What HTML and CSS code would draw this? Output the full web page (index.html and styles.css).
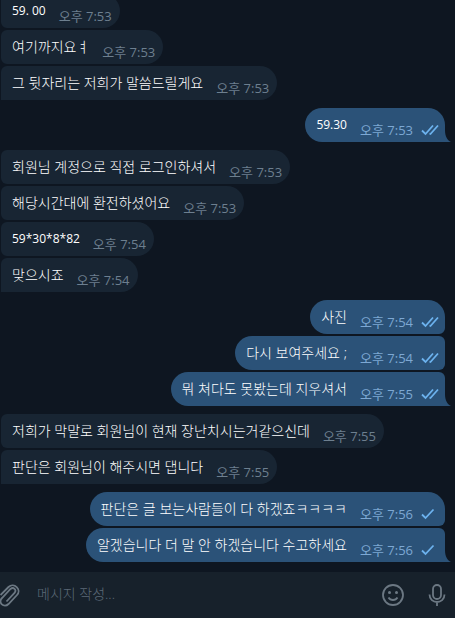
FILE: index.html
```html
<!DOCTYPE html>
<html lang="ko">

<head>
  <meta charset="utf-8">
  <meta name="viewport" content="width=device-width, initial-scale=1">
  <title>채팅</title>
  <link rel="stylesheet" href="styles.css">
</head>

<body>
  <svg class="sprite" aria-hidden="true">
    <symbol id="read" viewBox="0 0 18 12">
      <path d="M1 6.500l3.500 3.500 7.500-8.500M8.500 9.500l1 .5 7.500-8.500" />
    </symbol>
    <symbol id="sent" viewBox="0 0 18 12">
      <path d="M1 6.500l3.500 3.500 8-8.500" />
    </symbol>
    <symbol id="tail" viewBox="0 0 6 12">
      <path d="M0 0c0 6 2 10 6 12H0z" />
    </symbol>
  </svg>

  <main class="chat">
    <div class="group">
      <div class="message"><span class="text digits">59. 00</span><time>오후 7:53</time></div>
      <div class="message"><span class="text">여기까지요ㅕ</span><time>오후 7:53</time></div>
      <div class="message last"><span class="text">그 뒷자리는 저희가 말씀드릴게요</span><time>오후 7:53</time></div>
    </div>
    <div class="group out">
      <div class="message last"><span class="text digits">59.30</span><time>오후 7:53</time><svg class="status"><use href="#read" /></svg><svg class="tail"><use href="#tail" /></svg></div>
    </div>
    <div class="group">
      <div class="message"><span class="text">회원님 계정으로 직접 로그인하셔서</span><time>오후 7:53</time></div>
      <div class="message"><span class="text">해당시간대에 환전하셨어요</span><time>오후 7:53</time></div>
      <div class="message"><span class="text digits">59*30*8*82</span><time>오후 7:54</time></div>
      <div class="message last"><span class="text">맞으시죠</span><time>오후 7:54</time></div>
    </div>
    <div class="group out">
      <div class="message"><span class="text">사진</span><time>오후 7:54</time><svg class="status"><use href="#read" /></svg></div>
      <div class="message"><span class="text">다시 보여주세요 ;</span><time>오후 7:54</time><svg class="status"><use href="#read" /></svg></div>
      <div class="message last"><span class="text">뭐 쳐다도 못봤는데 지우셔서</span><time>오후 7:55</time><svg class="status"><use href="#read" /></svg><svg class="tail"><use href="#tail" /></svg></div>
    </div>
    <div class="group">
      <div class="message"><span class="text">저희가 막말로 회원님이 현재 장난치시는거같으신데</span><time>오후 7:55</time></div>
      <div class="message last"><span class="text">판단은 회원님이 해주시면 댑니다</span><time>오후 7:55</time></div>
    </div>
    <div class="group out">
      <div class="message"><span class="text">판단은 글 보는사람들이 다 하겠죠ㅋㅋㅋㅋ</span><time>오후 7:56</time><svg class="status"><use href="#sent" /></svg></div>
      <div class="message last"><span class="text">알겠습니다 더 말 안 하겠습니다 수고하세요</span><time>오후 7:56</time><svg class="status"><use href="#sent" /></svg><svg class="tail"><use href="#tail" /></svg></div>
    </div>
  </main>

  <form class="composer">
    <button type="button" class="attach" aria-label="파일 첨부">
      <svg viewBox="0 0 24 24"><path d="M2 11.500l8-8c5.500-5 13.500 2.500 8.500 8l-8.500 9c-4.500 4.500-11-1.500-6.500-6l8.500-9c3-2.500 6.500 1 4 3.800l-8 8.700" transform="translate(1.500 .5)" /></svg>
    </button>
    <input type="text" class="field" aria-label="메시지" placeholder="메시지 작성...">
    <button type="button" aria-label="이모티콘">
      <svg viewBox="0 0 24 24"><circle cx="12" cy="12" r="10" /><path d="M7.500 14.500c2 3.300 7 3.300 9 0" /><circle class="dot" cx="8.500" cy="9.500" r="1.500" /><circle class="dot" cx="15.500" cy="9.500" r="1.500" /></svg>
    </button>
    <button type="button" aria-label="음성 메시지">
      <svg viewBox="0 0 24 24"><rect x="8" y="2" width="8" height="14" rx="4" /><path d="M4.500 11.500c0 10 15 10 15 0M12 19v4" /></svg>
    </button>
  </form>
</body>

</html>
```
FILE: styles.css
```css
* {
  box-sizing: border-box;
}

body {
  margin: 0;
  height: 100vh;
  display: flex;
  flex-direction: column;
  background: #0e1621;
  color: #fff;
  font-family: "Open Sans", "Noto Sans CJK KR", sans-serif;
  font-size: 14px;
}

.sprite {
  display: none;
}

.chat {
  flex: 1;
  min-height: 0;
  overflow: hidden;
  display: flex;
  flex-direction: column;
  justify-content: flex-end;
  gap: 8px;
  padding: 0 10px 10px 1px;
}

.group {
  display: flex;
  flex-direction: column;
  align-items: flex-start;
  gap: 2px;
}

.group.out {
  align-items: flex-end;
}

.message {
  position: relative;
  display: flex;
  min-height: 34px;
  padding: 7px 8px 3px 11px;
  border-radius: 6px 17px 17px 6px;
  background: #182533;
}

.message.last {
  border-bottom-left-radius: 0;
}

.text {
  font-weight: 300;
  line-height: 20px;
}

.text.digits {
  font-size: 12px;
  font-weight: 400;
}

time {
  align-self: flex-end;
  margin-left: 13px;
  font-size: 13px;
  line-height: 18px;
  white-space: nowrap;
  color: #6d7f8f;
}

/* outgoing bubbles */
.out .message {
  padding-right: 6px;
  border-radius: 17px 6px 6px 17px;
  background: #2b5278;
}

.out .message:first-child {
  border-top-right-radius: 17px;
}

.out .message.last {
  border-bottom-right-radius: 0;
}

.out time {
  color: #7da8d3;
}

.status {
  align-self: flex-end;
  width: 18px;
  height: 12px;
  margin: 0 0 3px 8px;
  fill: none;
  stroke: #6cb2ee;
  stroke-width: 1.8;
}

.tail {
  position: absolute;
  left: 100%;
  bottom: 0;
  width: 6px;
  height: 12px;
  fill: #2b5278;
}

.composer {
  display: flex;
  align-items: center;
  height: 46px;
  padding-right: 6px;
  background: #17212b;
}

.composer button {
  display: flex;
  margin-left: 20px;
  padding: 0;
  border: 0;
  background: none;
  cursor: pointer;
}

.composer .attach {
  margin-left: -3px;
}

.composer svg {
  width: 24px;
  height: 24px;
  fill: none;
  stroke: #6c7883;
  stroke-width: 1.8;
}

.composer .dot {
  fill: #6c7883;
  stroke: none;
}

.field {
  flex: 1;
  min-width: 0;
  padding: 0 0 4px 16px;
  border: 0;
  outline: none;
  background: none;
  color: #fff;
  font: inherit;
  font-weight: 300;
}

.field::placeholder {
  color: #5c6977;
}
```
